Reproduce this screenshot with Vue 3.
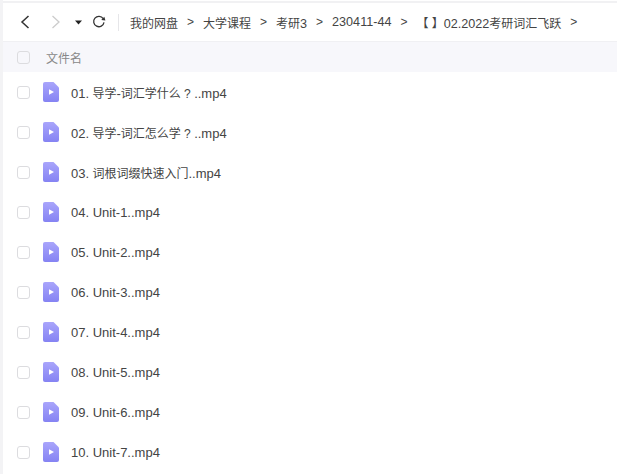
<script setup>
const pattern = /( \? |[\u4e00-\u9fff【】 ]*[\u4e00-\u9fff【】]+)/
const segments = (text) =>
  text.split(pattern).filter(Boolean).map((t) => ({ t, cjk: pattern.test(t) }))
const crumbs = ['我的网盘', '大学课程', '考研3', '230411-44', '【 】02.2022考研词汇飞跃'].map(segments)
const files = ['01. 导学-词汇学什么 ? ..mp4','02. 导学-词汇怎么学 ? ..mp4','03. 词根词缀快速入门..mp4','04. Unit-1..mp4','05. Unit-2..mp4','06. Unit-3..mp4','07. Unit-4..mp4','08. Unit-5..mp4','09. Unit-6..mp4','10. Unit-7..mp4'].map(segments)
</script>

<template>
  <div class="page">
    <div class="toolbar">
      <svg class="nav back" width="10" height="14" viewBox="0 0 10 14"><path d="M8.5 1 L2 7 L8.5 13" fill="none" stroke="#333" stroke-width="1.5"/></svg>
      <svg class="nav fwd" width="10" height="14" viewBox="0 0 10 14"><path d="M1.5 1 L8 7 L1.5 13" fill="none" stroke="#ccc" stroke-width="1.3"/></svg>
      <svg class="nav caret" width="7" height="5" viewBox="0 0 7 5"><path d="M0 0.5 H7 L3.5 4.5 Z" fill="#222"/></svg>
      <svg class="nav refresh" width="14" height="14" viewBox="0 0 14 14"><path d="M11.2 3.6 A5.2 5.2 0 1 0 12 7.4" fill="none" stroke="#333" stroke-width="1.3"/><path d="M9.4 5.2 L13.6 5.2 L12 1.6 Z" fill="#333" transform="rotate(8 11 4)"/></svg>
      <span class="sep"></span>
      <div class="crumbs">
        <template v-for="(c, i) in crumbs" :key="i">
          <span class="crumb"><span v-for="(s, j) in c" :key="j" :class="{ cjk: s.cjk }">{{ s.t }}</span></span><span class="gt">&gt;</span>
        </template>
      </div>
    </div>
    <div class="head">
      <span class="check head-check"></span>
      <span class="head-name">文件名</span>
    </div>
    <div v-for="(f, i) in files" :key="i" class="row">
      <span class="check"></span>
      <svg class="file" width="16" height="20" viewBox="0 0 16 20">
        <defs><linearGradient id="fg" x1="0" y1="0" x2="0" y2="1"><stop offset="0" stop-color="#a9a5fb"/><stop offset="1" stop-color="#8583f3"/></linearGradient></defs>
        <path d="M2 0 H10.5 L16 5.5 V18 A2 2 0 0 1 14 20 H2 A2 2 0 0 1 0 18 V2 A2 2 0 0 1 2 0 Z" fill="url(#fg)"/>
        <path d="M6 7.2 L11 10 L6 12.8 Z" fill="#fff"/>
      </svg>
      <span class="name"><span v-for="(s, j) in f" :key="j" :class="{ cjk: s.cjk }">{{ s.t }}</span></span>
    </div>
  </div>
</template>

<style>
html, body { margin: 0; background: #fff; overflow: hidden; }
</style>

<style scoped>
.page {
  width: 617px;
  height: 474px;
  box-sizing: border-box;
  overflow: hidden;
  border-left: 3px solid #f3f3f5;
  padding-top: 1px;
  background: #fff;
  font-family: "Liberation Sans", "Noto Sans CJK SC", sans-serif;
  color: #444;
}
.cjk { font-size: 12px; white-space: pre; }
.toolbar {
  height: 41px;
  box-sizing: border-box;
  border-top: 2px solid #f1f1f3;
  border-bottom: 1px solid #f0f0f3;
  display: flex;
  align-items: center;
}
.nav { flex: none; }
.back { margin-left: 17px; }
.fwd { margin-left: 21px; }
.caret { margin-left: 14px; }
.refresh { margin-left: 10px; }
.sep { width: 1px; height: 17px; background: #e6e6e9; margin: 0 11px 0 12px; }
.crumbs { display: flex; align-items: center; font-size: 12.6px; white-space: nowrap; color: #444; }
.gt { margin: 0 9px; font-size: 12px; }
.head {
  height: 30px;
  background: #f7f7fb;
  display: flex;
  align-items: center;
  font-size: 12px;
  color: #888;
}
.check {
  flex: none;
  width: 11px;
  height: 11px;
  border: 1px solid #dcdcdf;
  border-radius: 3px;
  margin-left: 14px;
  background: #fff;
}
.head-check { background: #f7f7fb; }
.head-name { margin-left: 16px; }
.row {
  height: 40px;
  display: flex;
  align-items: center;
  font-size: 13px;
}
.file { flex: none; margin-left: 13px; }
.name { margin-left: 12px; white-space: nowrap; }
</style>
